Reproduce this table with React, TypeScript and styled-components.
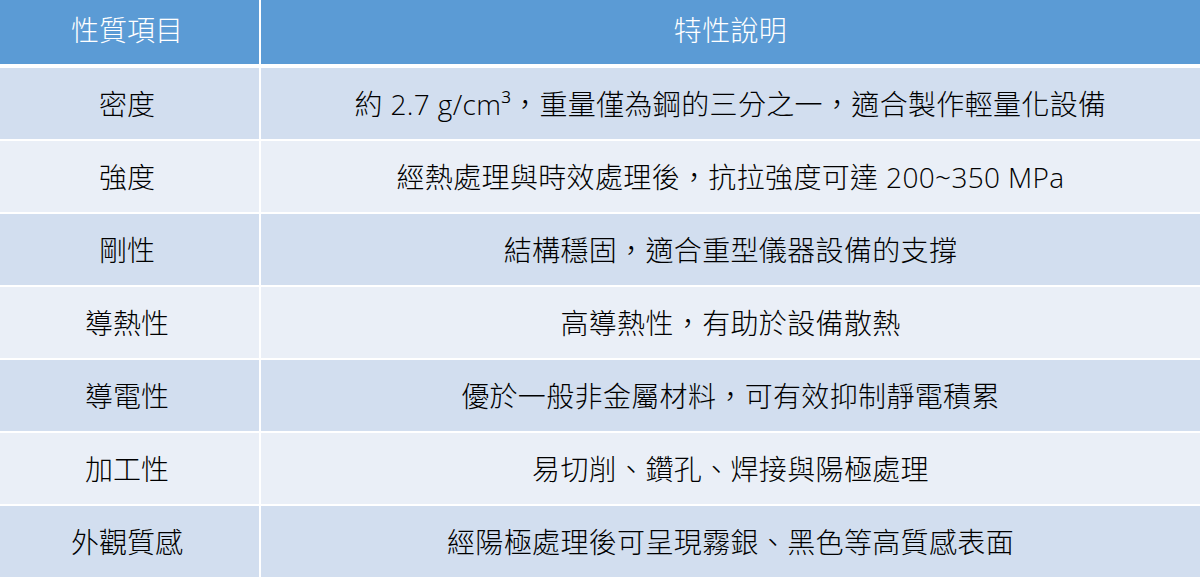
import styled, { createGlobalStyle } from "styled-components";

const GlobalStyle = createGlobalStyle`
  html, body {
    margin: 0;
    padding: 0;
    background: #ffffff;
  }
  body {
    font-family: "Open Sans", "Noto Sans CJK TC", sans-serif;
  }
`;

const Page = styled.div`
  width: 1200px;
  height: 578px;
  background: #ffffff;
  overflow: hidden;
`;

const Table = styled.div`
  display: flex;
  flex-direction: column;
`;

const Row = styled.div<{ $header?: boolean }>`
  display: grid;
  grid-template-columns: 259px 1fr;
  column-gap: 2px;
  height: ${({ $header }) => ($header ? "64px" : "71px")};
  margin-bottom: ${({ $header }) => ($header ? "4px" : "2px")};
`;

type Tone = "header" | "dark" | "light";

const Cell = styled.div<{ $tone: Tone; $first?: boolean }>`
  display: flex;
  align-items: center;
  justify-content: center;
  padding-right: ${({ $first }) => ($first ? "5px" : "0")};
  font-size: 28px;
  font-weight: 300;
  line-height: 1;
  letter-spacing: ${({ $first }) => ($first ? "0" : "0.35px")};
  white-space: nowrap;
  color: ${({ $tone }) => ($tone === "header" ? "#ffffff" : "#000000")};
  background: ${({ $tone }) =>
    $tone === "header" ? "#5b9bd5" : $tone === "dark" ? "#d2deef" : "#eaeff7"};
`;

const HeaderText = styled.span`
  position: relative;
  top: -2px;
`;

const rows = [
  { name: "密度", desc: "約 2.7 g/cm³，重量僅為鋼的三分之一，適合製作輕量化設備" },
  { name: "強度", desc: "經熱處理與時效處理後，抗拉強度可達 200~350 MPa" },
  { name: "剛性", desc: "結構穩固，適合重型儀器設備的支撐" },
  { name: "導熱性", desc: "高導熱性，有助於設備散熱" },
  { name: "導電性", desc: "優於一般非金屬材料，可有效抑制靜電積累" },
  { name: "加工性", desc: "易切削、鑽孔、焊接與陽極處理" },
  { name: "外觀質感", desc: "經陽極處理後可呈現霧銀、黑色等高質感表面" },
];

export default function App() {
  return (
    <Page lang="zh-TW">
      <GlobalStyle />
      <Table>
        <Row $header>
          <Cell $tone="header" $first>
            <HeaderText>性質項目</HeaderText>
          </Cell>
          <Cell $tone="header">
            <HeaderText>特性說明</HeaderText>
          </Cell>
        </Row>
        {rows.map((row, i) => {
          const tone: Tone = i % 2 === 0 ? "dark" : "light";
          return (
            <Row key={row.name}>
              <Cell $tone={tone} $first>
                {row.name}
              </Cell>
              <Cell $tone={tone}>{row.desc}</Cell>
            </Row>
          );
        })}
      </Table>
    </Page>
  );
}
